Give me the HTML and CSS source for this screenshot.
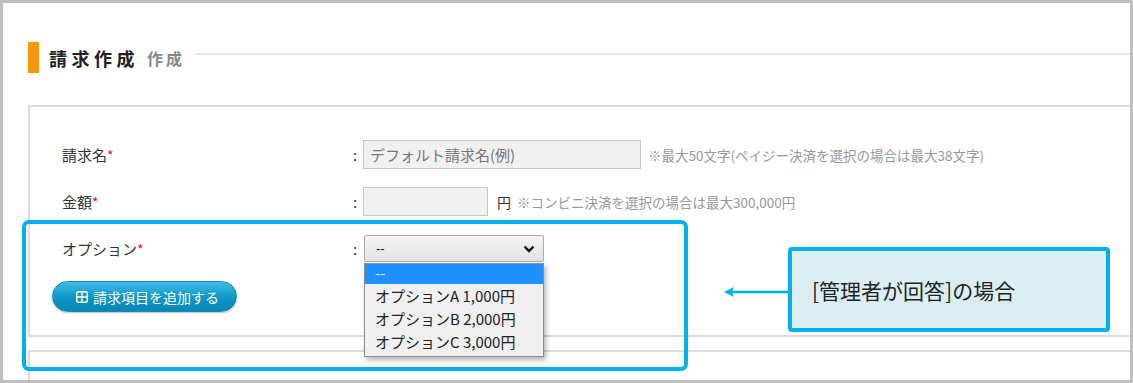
FILE: index.html
```html
<!DOCTYPE html>
<html lang="ja">
<head>
  <meta charset="UTF-8">
  <title>請求作成</title>
  <link rel="stylesheet" href="styles.css">
</head>
<body>
  <div class="frame">
    <div class="section-head">
      <span class="head-bar"></span>
      <h1 class="head-title">請求作成</h1>
      <span class="head-sub">作成</span>
      <span class="head-line"></span>
    </div>

    <div class="panel">
      <div class="form-row">
        <div class="label">請求名<span class="req">*</span></div>
        <div class="colon">:</div>
        <div class="field">
          <input class="text-input wide" type="text" placeholder="デフォルト請求名(例)">
          <span class="note">※最大50文字(ペイジー決済を選択の場合は最大38文字)</span>
        </div>
      </div>
      <div class="form-row">
        <div class="label">金額<span class="req">*</span></div>
        <div class="colon">:</div>
        <div class="field">
          <input class="text-input short" type="text">
          <span class="yen">円</span>
          <span class="note">※コンビニ決済を選択の場合は最大300,000円</span>
        </div>
      </div>
      <div class="form-row">
        <div class="label">オプション<span class="req">*</span></div>
        <div class="colon">:</div>
        <div class="field">
          <div class="select-wrap">
            <div class="select-box">
              <span>--</span>
              <svg class="chevron" width="12" height="8" viewBox="0 0 12 8"><path d="M1.5 1.5 L6 6 L10.5 1.5" fill="none" stroke="#111" stroke-width="2.4"/></svg>
            </div>
            <ul class="option-list">
              <li class="selected">--</li>
              <li>オプションA 1,000円</li>
              <li>オプションB 2,000円</li>
              <li>オプションC 3,000円</li>
            </ul>
          </div>
        </div>
      </div>
      <button class="add-btn">
        <svg width="12" height="12" viewBox="0 0 12 12"><rect x="0.75" y="0.75" width="10.5" height="10.5" rx="1.5" fill="none" stroke="#fff" stroke-width="1.4"/><path d="M6 1 V11 M1 6 H11" stroke="#fff" stroke-width="1.4"/></svg>
        請求項目を追加する
      </button>
    </div>

    <div class="panel panel-next"></div>

    <!-- annotation overlays -->
    <div class="highlight-box"></div>
    <svg class="callout-arrow" width="64" height="12" viewBox="0 0 64 12">
      <path d="M8 6 H64" stroke="#00b0f0" stroke-width="2.5"/>
      <path d="M0 6 L10 1 L8 6 L10 11 Z" fill="#00b0f0"/>
    </svg>
    <div class="callout">[管理者が回答]の場合</div>
  </div>
</body>
</html>
```

FILE: styles.css
```css
body {
  margin: 0;
  font-family: "Noto Sans CJK JP", "Noto Sans", sans-serif;
  color: #333;
  background: #fff;
}
.frame {
  position: relative;
  box-sizing: border-box;
  width: 1133px;
  height: 383px;
  border: 3px solid #bfbfbf;
  padding: 39px 0 0 25px;
  overflow: hidden;
}

/* heading */
.section-head {
  display: flex;
  align-items: center;
  height: 31px;
}
.head-bar {
  width: 11px;
  height: 31px;
  background: #f7960f;
}
.head-title {
  margin: 0 0 0 10px;
  font-size: 18px;
  font-weight: bold;
  letter-spacing: 4.5px;
  color: #222;
}
.head-sub {
  margin-left: 8px;
  font-size: 16px;
  font-weight: bold;
  letter-spacing: 3px;
  color: #888;
}
.head-line {
  flex: 1;
  height: 2px;
  margin: 0 0 8px 10px;
  background: #e6e6e6;
}

/* panels */
.panel {
  box-sizing: border-box;
  margin-top: 32px;
  height: 232px;
  border: 2px solid #dcdcdc;
  border-right: 0;
  padding: 33px 0 0 22px;
}
.panel-next {
  margin-top: 13px;
  height: 60px;
}
.form-row {
  display: flex;
  align-items: center;
  height: 29px;
  margin-bottom: 18px;
  font-size: 15px;
}
.label {
  width: 291px;
  padding-left: 10px;
  color: #333;
}
.req {
  color: #e8141c;
  font-size: 14px;
}
.colon {
  width: 10px;
  color: #333;
}
.field {
  display: flex;
  align-items: center;
}
.text-input {
  box-sizing: border-box;
  height: 29px;
  border: 1px solid #c8c8c8;
  background: #f1f1f1;
  font-family: inherit;
  font-size: 15px;
  padding: 0 6px;
  color: #333;
}
.text-input::placeholder {
  color: #777;
}
.text-input.wide {
  width: 278px;
}
.text-input.short {
  width: 125px;
}
.yen {
  margin-left: 9px;
  font-size: 14px;
  color: #333;
}
.note {
  margin-left: 7px;
  font-size: 13.5px;
  color: #999;
}
.yen + .note {
  margin-left: 6px;
}

/* select with open list */
.select-wrap {
  position: relative;
  margin-left: 1px;
}
.select-box {
  box-sizing: border-box;
  display: flex;
  align-items: center;
  justify-content: space-between;
  width: 180px;
  height: 27px;
  padding: 0 8px 0 11px;
  border: 1px solid #a9a9a9;
  border-radius: 2px;
  background: linear-gradient(#f5f5f5, #e3e3e3);
  font-family: Arial, "Liberation Sans", sans-serif;
  font-size: 13px;
  color: #111;
}
.option-list {
  position: absolute;
  top: 100%;
  left: 0;
  z-index: 2;
  box-sizing: border-box;
  width: 180px;
  margin: 1px 0 0;
  padding: 0 0 3px;
  list-style: none;
  background: #f0f0f0;
  border: 1px solid #8e8e8e;
  box-shadow: 2px 3px 5px rgba(0, 0, 0, 0.3);
  font-size: 15px;
  color: #222;
}
.option-list li {
  height: 23px;
  line-height: 23px;
  padding-left: 10px;
  white-space: nowrap;
}
.option-list li.selected {
  height: 20px;
  line-height: 18px;
  background: #1e90ff;
  color: #fff;
}

/* add button */
.add-btn {
  display: flex;
  align-items: center;
  gap: 5px;
  margin-top: 0;
  width: 185px;
  height: 31px;
  padding: 0 0 0 23px;
  border: 1px solid #1489b3;
  border-radius: 16px;
  background: linear-gradient(#3fbde6, #0d96c6 55%, #0a86b4);
  box-shadow: 0 1px 2px rgba(0, 0, 0, 0.25);
  font-family: inherit;
  font-size: 14px;
  color: #fff;
}

/* annotation */
.highlight-box {
  position: absolute;
  left: 19px;
  top: 217px;
  box-sizing: border-box;
  width: 666px;
  height: 151px;
  border: 4px solid #00b0f0;
  border-radius: 7px;
}
.callout-arrow {
  position: absolute;
  left: 721px;
  top: 283px;
}
.callout {
  position: absolute;
  left: 785px;
  top: 244px;
  box-sizing: border-box;
  width: 322px;
  height: 85px;
  padding: 0 0 0 20px;
  display: flex;
  align-items: center;
  border: 4px solid #00b0f0;
  border-radius: 4px;
  background: #daeef3;
  font-size: 21px;
  color: #222;
}
```
